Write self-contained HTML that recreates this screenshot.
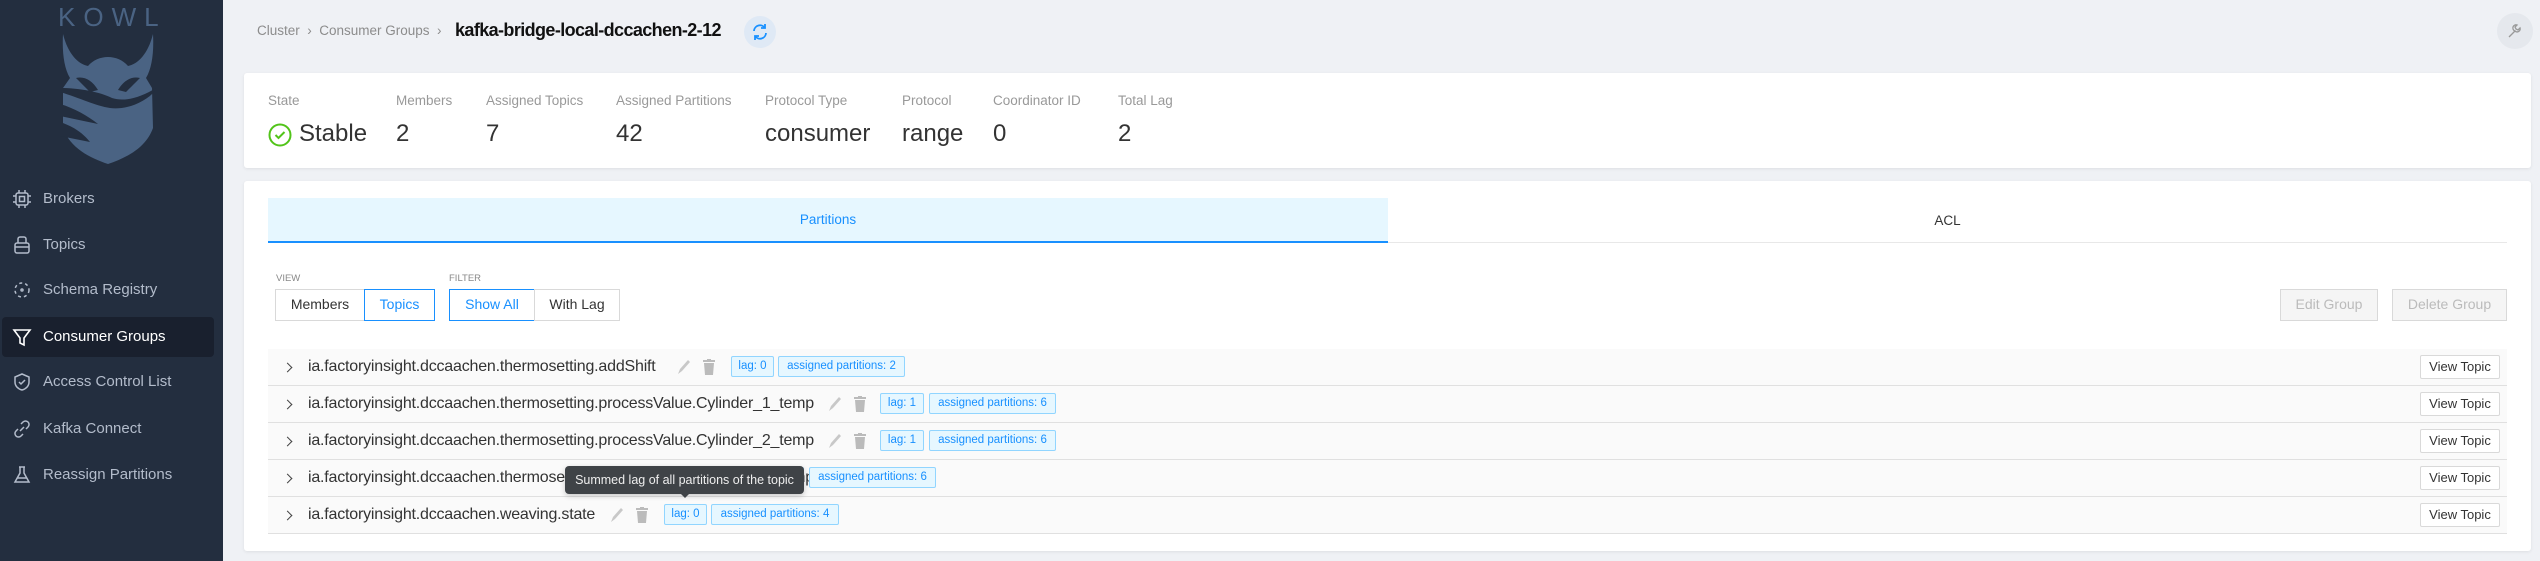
<!DOCTYPE html>
<html><head><meta charset="utf-8">
<style>
*{box-sizing:border-box;margin:0;padding:0}
body{width:2540px;height:561px;overflow:hidden;background:#eff1f5;font-family:"Liberation Sans",sans-serif;position:relative;color:#333}
.abs{position:absolute}
#side{left:0;top:0;width:223px;height:561px;background:#232e3f}
.nav{position:absolute;left:0;width:223px;height:40px;color:#b3bccb;font-size:15px;line-height:40px}
.nav span{position:absolute;left:43px;top:0;white-space:nowrap}
.nav svg{position:absolute;left:12px;top:10px}
.nav.act{background:#19202e;left:2px;width:212px;border-radius:4px;color:#fff}
.nav.act span{left:41px}
.nav.act svg{left:10px}
.card{background:#fff;border-radius:3px;box-shadow:0 1px 3px rgba(0,0,0,.08)}
.lab{font-size:13.5px;color:#999;white-space:nowrap}
.val{font-size:24px;color:#333;white-space:nowrap}
.btn{position:absolute;border:1px solid #d9d9d9;background:#fff;font-size:14px;text-align:center;line-height:29px;color:#333}
.row{position:absolute;left:268px;width:2239px;height:37px;background:#fafafa;border-bottom:1px solid #e0e0e0}
.row .t{position:absolute;left:40px;top:9px;font-size:16px;color:#333;white-space:nowrap;letter-spacing:-0.2px}
.chev{position:absolute;left:16px;top:15px;width:7px;height:7px;border-right:1.5px solid #444;border-top:1.5px solid #444;transform:rotate(45deg)}
.badge{position:absolute;top:7px;height:21px;border:1px solid #91d5ff;background:#e6f7ff;color:#1890ff;font-size:11.5px;line-height:19px;text-align:center;border-radius:2px;white-space:nowrap}
.vt{position:absolute;left:2152px;top:6px;width:80px;height:24px;border:1px solid #d9d9d9;background:#fff;font-size:13px;text-align:center;line-height:22px;color:#333;border-radius:2px}
.ic{position:absolute;top:10px}
</style></head><body>
<div id="side" class="abs">
  <div class="abs" style="left:58px;top:2px;font-size:26px;letter-spacing:8px;color:#4a6383">KOWL</div>
  <svg class="abs" style="left:60px;top:32px" width="96" height="133" viewBox="0 0 96 133">
    <path fill="#4a6383" d="M3 2 C8 22 18 32 28 34 C38 22 58 22 68 34 C78 32 88 22 93 2 C94 20 92 36 86 46 L92 56 L93 96 C86 116 66 126 48 132 C30 126 10 116 3 96 L3 56 L10 46 C4 36 2 20 3 2 Z"/>
    <path fill="#232e3f" d="M16 46 C24 44 32 48 38 58 L30 60 C24 54 20 50 16 46Z M80 46 C72 44 64 48 58 58 L66 60 C72 54 76 50 80 46Z M0 56 C20 56 40 60 52 66 C64 70 80 66 96 56 L96 58 C84 72 64 78 50 76 C36 74 20 66 0 60Z M0 72 C14 76 28 84 38 92 L0 84Z M0 90 C12 94 22 100 30 110 L0 104Z"/>
  </svg>
  <div class="nav" style="top:179px"><svg width="20" height="20" viewBox="0 0 20 20" fill="none" stroke="#b3bccb" stroke-width="1.5"><rect x="4" y="4" width="12" height="12" rx="2"/><rect x="7.5" y="7.5" width="5" height="5"/><path d="M7 1v3M13 1v3M7 16v3M13 16v3M1 7h3M1 13h3M16 7h3M16 13h3"/></svg><span>Brokers</span></div>
  <div class="nav" style="top:225px"><svg width="20" height="20" viewBox="0 0 20 20" fill="none" stroke="#b3bccb" stroke-width="1.5"><rect x="3" y="8" width="14" height="10" rx="2"/><path d="M6 8V4a2 2 0 0 1 2-2h4a2 2 0 0 1 2 2v4M3 12h14"/></svg><span>Topics</span></div>
  <div class="nav" style="top:270px"><svg width="20" height="20" viewBox="0 0 20 20" fill="none" stroke="#b3bccb" stroke-width="1.5" stroke-dasharray="3 3"><circle cx="10" cy="10" r="7"/><circle cx="10" cy="10" r="1" stroke-dasharray="none"/></svg><span>Schema Registry</span></div>
  <div class="nav act" style="top:317px"><svg width="20" height="20" viewBox="0 0 20 20" fill="none" stroke="#fff" stroke-width="1.6"><path d="M2 3h16l-6 8v7l-4-2v-5z"/></svg><span>Consumer Groups</span></div>
  <div class="nav" style="top:362px"><svg width="20" height="20" viewBox="0 0 20 20" fill="none" stroke="#b3bccb" stroke-width="1.5"><path d="M10 2l7 3v5c0 4-3 7-7 8-4-1-7-4-7-8V5z"/><path d="M7 10l2 2 4-4"/></svg><span>Access Control List</span></div>
  <div class="nav" style="top:409px"><svg width="20" height="20" viewBox="0 0 20 20" fill="none" stroke="#b3bccb" stroke-width="1.5"><path d="M8 12l4-4M9 5l2-2a3.5 3.5 0 0 1 5 5l-2 2M11 15l-2 2a3.5 3.5 0 0 1-5-5l2-2"/></svg><span>Kafka Connect</span></div>
  <div class="nav" style="top:455px"><svg width="20" height="20" viewBox="0 0 20 20" fill="none" stroke="#b3bccb" stroke-width="1.5"><path d="M7 2h6M8 2v6l-5 9h14l-5-9V2M5 13h10"/></svg><span>Reassign Partitions</span></div>
</div>

<div class="abs" style="left:257px;top:23px;font-size:13.5px;color:#8c8c8c;white-space:nowrap">Cluster &nbsp;›&nbsp; Consumer Groups &nbsp;›</div>
<div class="abs" style="left:455px;top:20px;font-size:18px;font-weight:bold;color:#111;white-space:nowrap;letter-spacing:-0.6px">kafka-bridge-local-dccachen-2-12</div>
<div class="abs" style="left:744px;top:16px;width:32px;height:32px;border-radius:50%;background:#dfe9f5"></div>
<svg class="abs" style="left:751px;top:23px" width="18" height="18" viewBox="0 0 18 18" fill="none" stroke="#1890ff" stroke-width="1.8"><path d="M3 8a6 6 0 0 1 11-3M15 10a6 6 0 0 1-11 3"/><path d="M14 1v4h-4M4 17v-4h4"/></svg>
<div class="abs" style="left:2497px;top:13px;width:36px;height:36px;border-radius:50%;background:#e5e8ed"></div>
<svg class="abs" style="left:2507px;top:23px" width="16" height="16" viewBox="0 0 16 16" fill="none" stroke="#999" stroke-width="1.3"><path d="M2 14l6-6a3 3 0 0 1 2-6l-2 2 1 2 2 1 2-2a3 3 0 0 1-5 3"/></svg>

<div class="abs card" style="left:244px;top:73px;width:2287px;height:95px"></div>
<div class="abs lab" style="left:268px;top:93px">State</div>
<div class="abs lab" style="left:396px;top:93px">Members</div>
<div class="abs lab" style="left:486px;top:93px">Assigned Topics</div>
<div class="abs lab" style="left:616px;top:93px">Assigned Partitions</div>
<div class="abs lab" style="left:765px;top:93px">Protocol Type</div>
<div class="abs lab" style="left:902px;top:93px">Protocol</div>
<div class="abs lab" style="left:993px;top:93px">Coordinator ID</div>
<div class="abs lab" style="left:1118px;top:93px">Total Lag</div>
<svg class="abs" style="left:268px;top:123px" width="24" height="24" viewBox="0 0 24 24" fill="none" stroke="#52c41a" stroke-width="2"><circle cx="12" cy="12" r="10.5"/><path d="M7.5 12l3 3 6-6"/></svg>
<div class="abs val" style="left:299px;top:120px">Stable</div>
<div class="abs val" style="left:396px;top:120px">2</div>
<div class="abs val" style="left:486px;top:120px">7</div>
<div class="abs val" style="left:616px;top:120px">42</div>
<div class="abs val" style="left:765px;top:120px">consumer</div>
<div class="abs val" style="left:902px;top:120px">range</div>
<div class="abs val" style="left:993px;top:120px">0</div>
<div class="abs val" style="left:1118px;top:120px">2</div>

<div class="abs card" style="left:244px;top:181px;width:2287px;height:370px"></div>
<div class="abs" style="left:268px;top:198px;width:1120px;height:45px;background:#e6f7ff;border-bottom:2px solid #1890ff;text-align:center;line-height:43px;color:#1890ff;font-size:13.5px">Partitions</div>
<div class="abs" style="left:1388px;top:198px;width:1119px;height:45px;border-bottom:1px solid #e8e8e8;text-align:center;line-height:45px;color:#333;font-size:13.5px">ACL</div>

<div class="abs" style="left:276px;top:273px;font-size:9.5px;color:#888">VIEW</div>
<div class="abs" style="left:449px;top:273px;font-size:9.5px;color:#888">FILTER</div>
<div class="btn" style="left:275px;top:289px;width:90px;height:32px">Members</div>
<div class="btn" style="left:364px;top:289px;width:71px;height:32px;border-color:#1890ff;color:#1890ff">Topics</div>
<div class="btn" style="left:449px;top:289px;width:86px;height:32px;border-color:#1890ff;color:#1890ff">Show All</div>
<div class="btn" style="left:534px;top:289px;width:86px;height:32px">With Lag</div>
<div class="btn" style="left:2280px;top:289px;width:98px;height:32px;background:#f5f5f5;color:#bbb">Edit Group</div>
<div class="btn" style="left:2392px;top:289px;width:115px;height:32px;background:#f5f5f5;color:#bbb">Delete Group</div>

<div class="row" style="top:349px"><div class="chev"></div><div class="t">ia.factoryinsight.dccaachen.thermosetting.addShift</div>
<svg class="ic" style="left:409px" width="14" height="16" viewBox="0 0 14 16"><path d="M1 15l2-5 8-9 2 2-8 9z" fill="#c8c8c8"/></svg>
<svg class="ic" style="left:435px" width="12" height="16" viewBox="0 0 12 16" fill="#bbb"><rect x="0" y="1" width="12" height="2"/><rect x="4" y="0" width="4" height="2"/><path d="M1 4h10l-1 12H2z"/></svg>
<div class="badge" style="left:463px;width:43px">lag: 0</div><div class="badge" style="left:510px;width:127px">assigned partitions: 2</div>
<div class="vt">View Topic</div></div>

<div class="row" style="top:386px"><div class="chev"></div><div class="t">ia.factoryinsight.dccaachen.thermosetting.processValue.Cylinder_1_temp</div>
<svg class="ic" style="left:560px" width="14" height="16" viewBox="0 0 14 16"><path d="M1 15l2-5 8-9 2 2-8 9z" fill="#c8c8c8"/></svg>
<svg class="ic" style="left:586px" width="12" height="16" viewBox="0 0 12 16" fill="#bbb"><rect x="0" y="1" width="12" height="2"/><rect x="4" y="0" width="4" height="2"/><path d="M1 4h10l-1 12H2z"/></svg>
<div class="badge" style="left:612px;width:44px">lag: 1</div><div class="badge" style="left:661px;width:127px">assigned partitions: 6</div>
<div class="vt">View Topic</div></div>

<div class="row" style="top:423px"><div class="chev"></div><div class="t">ia.factoryinsight.dccaachen.thermosetting.processValue.Cylinder_2_temp</div>
<svg class="ic" style="left:560px" width="14" height="16" viewBox="0 0 14 16"><path d="M1 15l2-5 8-9 2 2-8 9z" fill="#c8c8c8"/></svg>
<svg class="ic" style="left:586px" width="12" height="16" viewBox="0 0 12 16" fill="#bbb"><rect x="0" y="1" width="12" height="2"/><rect x="4" y="0" width="4" height="2"/><path d="M1 4h10l-1 12H2z"/></svg>
<div class="badge" style="left:612px;width:44px">lag: 1</div><div class="badge" style="left:661px;width:127px">assigned partitions: 6</div>
<div class="vt">View Topic</div></div>

<div class="row" style="top:460px"><div class="chev"></div><div class="t">ia.factoryinsight.dccaachen.thermosetting.processValue.Cylinder_3_temp</div>
<div class="badge" style="left:492px;width:44px">lag: 1</div><div class="badge" style="left:541px;width:127px">assigned partitions: 6</div>
<div class="vt">View Topic</div></div>

<div class="row" style="top:497px"><div class="chev"></div><div class="t">ia.factoryinsight.dccaachen.weaving.state</div>
<svg class="ic" style="left:342px" width="14" height="16" viewBox="0 0 14 16"><path d="M1 15l2-5 8-9 2 2-8 9z" fill="#c8c8c8"/></svg>
<svg class="ic" style="left:368px" width="12" height="16" viewBox="0 0 12 16" fill="#bbb"><rect x="0" y="1" width="12" height="2"/><rect x="4" y="0" width="4" height="2"/><path d="M1 4h10l-1 12H2z"/></svg>
<div class="badge" style="left:396px;width:43px">lag: 0</div><div class="badge" style="left:443px;width:128px">assigned partitions: 4</div>
<div class="vt">View Topic</div></div>

<div class="abs" style="left:565px;top:466px;width:239px;height:28px;background:#3f4347;border-radius:4px;color:#eee;font-size:12.5px;line-height:28px;text-align:center;white-space:nowrap;box-shadow:0 2px 6px rgba(0,0,0,.2)">Summed lag of all partitions of the topic</div>
<div class="abs" style="left:681px;top:494px;width:0;height:0;border-left:4px solid transparent;border-right:4px solid transparent;border-top:4px solid #3f4347"></div>
</body></html>
